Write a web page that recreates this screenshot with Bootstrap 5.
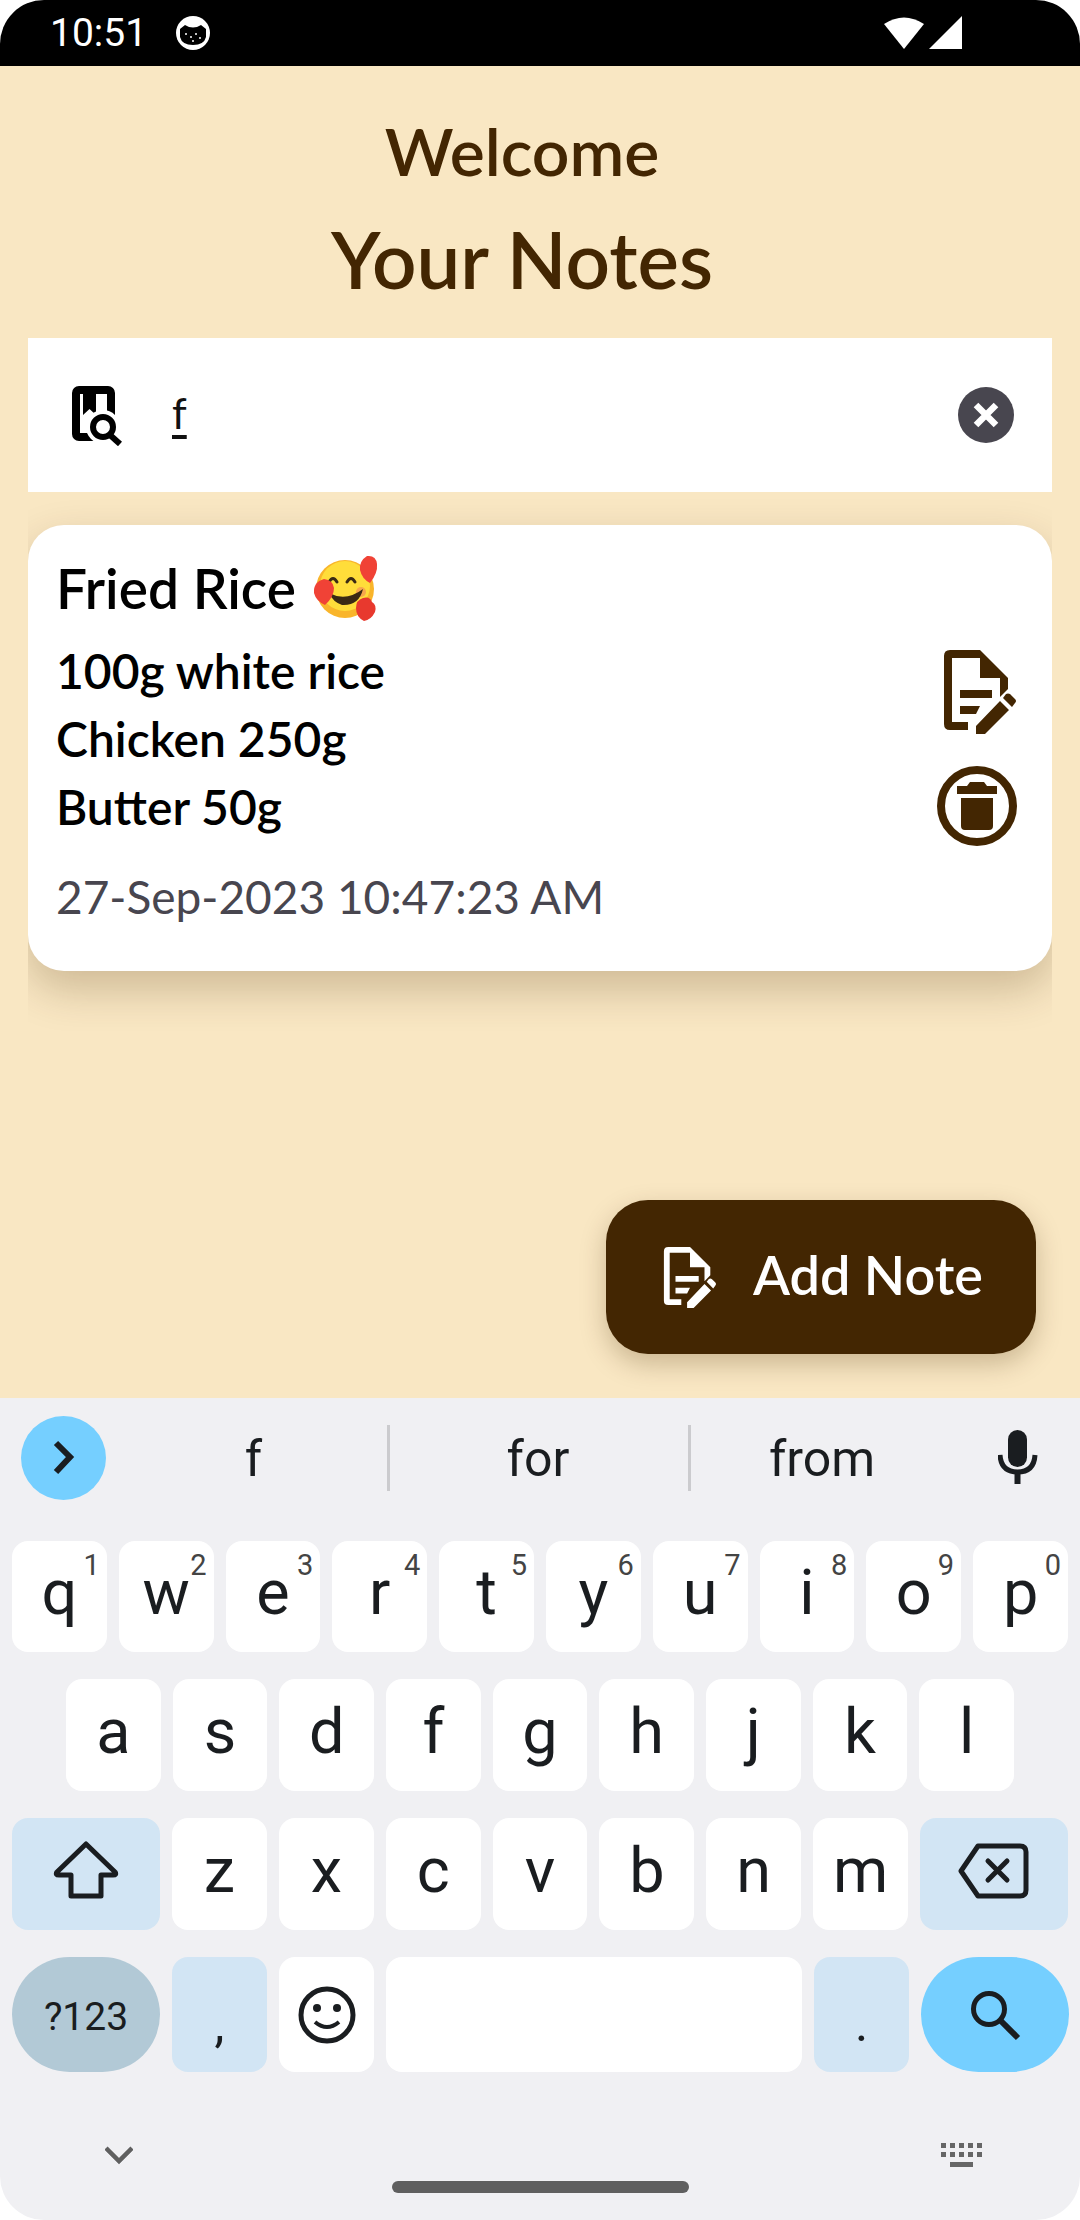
<!DOCTYPE html>
<html lang="en">
<head>
  <meta charset="UTF-8" />
  <meta name="viewport" content="width=device-width, initial-scale=1.0"/>
  <title>Your Notes</title>
  <link href="https://cdn.jsdelivr.net/npm/bootstrap@5.3.3/dist/css/bootstrap.min.css" rel="stylesheet" />
  <style>
    html, body { margin: 0; background: #fff; }
    .phone { width: 1080px; height: 2220px; border-radius: 44px; overflow: hidden; font-family: Lato, sans-serif; }
    .status-bar { height: 66px; background: #000; color: #fff; padding: 0 50px; font: 39px Roboto, sans-serif; }
    .status-cat { margin-left: 28px; }
    .status-right { margin-left: auto; margin-right: 68px; }
    .app-area { height: 1332px; background: #f9e7c3; position: relative; }
    .hello { color: #432602; font-size: 66px; line-height: 80px; padding: 45px 36px 0 0; font-weight: 600; }
    .page-title { color: #432602; font-size: 78px; line-height: 92px; padding: 22px 36px 0 0; font-weight: 600; }
    .search-bar { margin: 33px 28px 0; height: 154px; padding: 0 38px 0 42px; }
    .search-text { margin: 0 0 4px 48px; font-size: 42px; color: #111; text-decoration: underline; text-underline-offset: 6px; }
    .clear-btn { width: 56px; height: 56px; border-radius: 50%; background: #48464f; margin-left: auto; }
    .list-clip { margin: 0 28px; padding: 33px 0 60px; overflow: hidden; }
    .note-card { height: 446px; border: 0; border-radius: 36px; box-shadow: 0 18px 44px rgba(67, 38, 2, .24); padding: 0 35px 0 28px; position: relative; }
    .note-title { color: #000; font-size: 55px; line-height: 60px; font-weight: 600; padding-top: 30px; }
    .note-line { color: #000; font-size: 48px; line-height: 68px; font-weight: 600; }
    .note-lines { padding-top: 16px; }
    .note-date { color: #48464f; font-size: 46px; line-height: 60px; padding-top: 26px; }
    .note-actions { gap: 28px; padding-top: 121px; }
    .note-edit { color: #432602; margin-right: -3px; }
    .fab { position: absolute; left: 606px; top: 1134px; width: 430px; height: 154px; border-radius: 42px; background: #432602; color: #fff; border: 0; box-shadow: 0 10px 26px rgba(67, 38, 2, .25); font-size: 54px; font-weight: 600; gap: 34px; padding: 0 0 6px 55px; }
    .fab svg { margin-top: 6px; }
    .fab:hover, .fab:active { background: #432602 !important; color: #fff !important; }
    .kb { height: 822px; background: #f0f0f3; font-family: Roboto, sans-serif; color: #1a1d20; }
    .kb-suggest { height: 143px; padding: 18px 0 0 21px; align-items: flex-start; }
    .kb-more { width: 85px; height: 84px; border-radius: 50%; background: #75cfff; }
    .kb-word { height: 66px; margin-top: 9px; font-size: 50px; padding: 2px 2px 0 0; }
    .kb-word-1 { width: 281px; padding-left: 16px; }
    .kb-word-2 { border-left: 3px solid #cbcbce; border-right: 3px solid #cbcbce; width: 304px; }
    .kb-word-3 { width: 264px; }
    .kb-mic { margin: 14px 0 0 43px; }
    .kb-rows { gap: 27px; padding: 0 12px; }
    .kb-row { gap: 12px; height: 111px; }
    .kb-row-2 { padding: 0 54px; height: 112px; }
    .kb-row-3 { height: 112px; }
    .kb-row-4 { height: 115px; }
    .kb-key { flex: 1 1 0; background: #fff; border-radius: 16px; font-size: 63px; position: relative; padding-bottom: 6px; }
    .kb-num { position: absolute; top: 3px; right: 7px; font-size: 29px; color: #444; }
    .kb-wide { flex: 0 0 148px; }
    .kb-blue { background: #d2e5f4; }
    .kb-pill { background: #b2c9d6; border-radius: 58px; font-size: 39px; padding: 5px 0 0; }
    .kb-go { background: #75cfff; border-radius: 58px; padding: 0; }
    .kb-space { flex: 0 0 416px; }
    .kb-punct { flex: 0 0 95px; font-size: 50px; padding: 20px 0 0; }
    .kb-emoji { flex: 0 0 95px; padding: 0; }
    .kb-foot { padding: 71px 97px 0 105px; }
    .kb-handle { width: 297px; height: 12px; border-radius: 6px; background: #5f5f5f; margin: 14px auto 0; }
  </style>
</head>
<body>

  <!-- shared icon: note with pencil -->
  <svg width="0" height="0" class="position-absolute">
    <symbol id="noteEdit" viewBox="940 645 80 92">
      <path fill="currentColor" d="M950 649H980L1008 677V688L1000 696V677H980V657H952V721H968V729H950Q944 729 944 723V655Q944 649 950 649Z"/>
      <path fill="currentColor" d="M960 689H992V697H960ZM960 705H980L976 713H960Z"/>
      <path fill="currentColor" d="M976 733V725L1000 700L1009 709L985 733ZM1003 697L1006 693Q1008 692 1010 693L1015 698Q1017 700 1015 702L1012 706Z"/>
    </symbol>
  </svg>

  <div class="phone d-flex flex-column">

    <div class="status-bar d-flex align-items-center">
      <span>10:51</span>
      <svg class="status-cat" width="36" height="36" viewBox="0 0 36 36">
        <circle cx="18" cy="18" r="17" fill="#fff"/>
        <path d="M5 14L10 10Q18 15 26 10L31 14V22Q29 30 18 30Q7 30 5 22Z" fill="#000"/>
        <g fill="#fff"><circle cx="11" cy="19" r="1"/><circle cx="16" cy="22" r="1"/><circle cx="21" cy="19" r="1"/><circle cx="25" cy="23" r="1"/><circle cx="18" cy="26" r="1"/></g>
      </svg>
      <svg class="status-right" width="80" height="36" viewBox="0 0 80 36">
        <path d="M2 9Q22 -4 42 9L22 34Z" fill="#fff"/>
        <path d="M80 1V34H47Z" fill="#fff"/>
      </svg>
    </div>

    <div class="app-area">
      <div class="hello text-center">Welcome</div>
      <div class="page-title text-center">Your Notes</div>

      <div class="search-bar bg-white d-flex align-items-center">
        <svg width="54" height="62" viewBox="70 385 54 62">
          <rect x="76" y="391" width="35" height="47" rx="3" fill="none" stroke="#000" stroke-width="8"/>
          <path d="M83 391H96V416L89.500 410L83 416Z" fill="#000"/>
          <circle cx="103" cy="428" r="17" fill="#fff"/>
          <circle cx="103" cy="428" r="10" fill="none" stroke="#000" stroke-width="6"/>
          <path d="M110 436L120 445" stroke="#000" stroke-width="6"/>
        </svg>
        <span class="search-text">f</span>
        <div class="clear-btn d-flex align-items-center justify-content-center">
          <svg width="32" height="32" viewBox="0 0 32 32"><path d="M6 6L26 26M26 6L6 26" stroke="#fff" stroke-width="6.500"/></svg>
        </div>
      </div>

      <div class="list-clip">
        <div class="card note-card d-flex flex-row justify-content-between">
          <div>
            <div class="note-title d-flex align-items-center">Fried Rice
              <svg class="ms-3" width="66" height="66" viewBox="0 0 66 66">
                <circle cx="33" cy="34" r="29" fill="#f9b52b"/>
                <circle cx="33" cy="31" r="25" fill="#ffdd3a"/>
                <circle cx="49" cy="37" r="5" fill="#f7a84c"/>
                <path d="M17 27Q21 20 25 27M35 27Q39 20 43 27" fill="none" stroke="#3a2a14" stroke-width="3" stroke-linecap="round"/>
                <path d="M17 38Q34 47 51 34Q47 51 30 50Q21 47 17 38Z" fill="#3a2a14"/>
                <path d="M55 1Q64 0 65 9Q66 18 58 28Q50 24 48 15Q47 6 55 1Z" fill="#f04236"/>
                <path d="M12 24Q21 25 22 33Q22 42 13 50Q4 46 2 38Q1 27 12 24Z" fill="#f04236"/>
                <path d="M51 43Q58 41 60 47Q65 50 63 57Q59 65 52 66Q44 62 44 53Q44 45 51 43Z" fill="#e8392e"/>
              </svg>
            </div>
            <div class="note-lines">
              <div class="note-line">100g white rice</div>
              <div class="note-line">Chicken 250g</div>
              <div class="note-line">Butter 50g</div>
            </div>
            <div class="note-date">27-Sep-2023 10:47:23 AM</div>
          </div>
          <div class="note-actions d-flex flex-column align-items-end">
            <svg width="80" height="92" class="note-edit"><use href="#noteEdit"/></svg>
            <svg width="80" height="80" viewBox="936 767 80 80">
              <circle cx="976" cy="807" r="36" fill="none" stroke="#432602" stroke-width="8"/>
              <path fill="#432602" d="M956 787H966L969 783H983L986 787H996V795H956ZM960 799H992V827Q992 831 988 831H964Q960 831 960 827Z"/>
            </svg>
          </div>
        </div>
      </div>

      <button class="btn fab d-flex align-items-center">
        <svg width="58" height="67"><use href="#noteEdit"/></svg>
        <span>Add Note</span>
      </button>
    </div>

    <div class="kb">
      <div class="kb-suggest d-flex">
        <div class="kb-more d-flex align-items-center justify-content-center">
          <svg width="24" height="36" viewBox="0 0 24 36"><path d="M4 3L18 17L4 32" fill="none" stroke="#1a1d20" stroke-width="6"/></svg>
        </div>
        <div class="kb-word kb-word-1 d-flex align-items-center justify-content-center">f</div>
        <div class="kb-word kb-word-2 d-flex align-items-center justify-content-center">for</div>
        <div class="kb-word kb-word-3 d-flex align-items-center justify-content-center">from</div>
        <svg class="kb-mic" width="40" height="54" viewBox="0 0 40 54">
          <rect x="10" y="0" width="19" height="37" rx="9.500" fill="#1a1d20"/>
          <path d="M2 25Q3 42 19.500 42Q36 42 37 25" fill="none" stroke="#1a1d20" stroke-width="5"/>
          <path d="M19.500 42V54" stroke="#1a1d20" stroke-width="6"/>
        </svg>
      </div>

      <div class="kb-rows d-flex flex-column">
        <div class="kb-row d-flex">
          <div class="kb-key d-flex align-items-center justify-content-center">q<span class="kb-num">1</span></div>
          <div class="kb-key d-flex align-items-center justify-content-center">w<span class="kb-num">2</span></div>
          <div class="kb-key d-flex align-items-center justify-content-center">e<span class="kb-num">3</span></div>
          <div class="kb-key d-flex align-items-center justify-content-center">r<span class="kb-num">4</span></div>
          <div class="kb-key d-flex align-items-center justify-content-center">t<span class="kb-num">5</span></div>
          <div class="kb-key d-flex align-items-center justify-content-center">y<span class="kb-num">6</span></div>
          <div class="kb-key d-flex align-items-center justify-content-center">u<span class="kb-num">7</span></div>
          <div class="kb-key d-flex align-items-center justify-content-center">i<span class="kb-num">8</span></div>
          <div class="kb-key d-flex align-items-center justify-content-center">o<span class="kb-num">9</span></div>
          <div class="kb-key d-flex align-items-center justify-content-center">p<span class="kb-num">0</span></div>
        </div>
        <div class="kb-row kb-row-2 d-flex">
          <div class="kb-key d-flex align-items-center justify-content-center">a</div>
          <div class="kb-key d-flex align-items-center justify-content-center">s</div>
          <div class="kb-key d-flex align-items-center justify-content-center">d</div>
          <div class="kb-key d-flex align-items-center justify-content-center">f</div>
          <div class="kb-key d-flex align-items-center justify-content-center">g</div>
          <div class="kb-key d-flex align-items-center justify-content-center">h</div>
          <div class="kb-key d-flex align-items-center justify-content-center">j</div>
          <div class="kb-key d-flex align-items-center justify-content-center">k</div>
          <div class="kb-key d-flex align-items-center justify-content-center">l</div>
        </div>
        <div class="kb-row kb-row-3 d-flex">
          <div class="kb-key kb-wide kb-blue d-flex align-items-center justify-content-center">
            <svg width="66" height="60" viewBox="0 0 66 60"><path d="M33 3L4 31Q2 34 6 34H18V55H48V34H60Q64 34 62 31Z" fill="none" stroke="#1a1d20" stroke-width="5" stroke-linejoin="round"/></svg>
          </div>
          <div class="kb-key d-flex align-items-center justify-content-center">z</div>
          <div class="kb-key d-flex align-items-center justify-content-center">x</div>
          <div class="kb-key d-flex align-items-center justify-content-center">c</div>
          <div class="kb-key d-flex align-items-center justify-content-center">v</div>
          <div class="kb-key d-flex align-items-center justify-content-center">b</div>
          <div class="kb-key d-flex align-items-center justify-content-center">n</div>
          <div class="kb-key d-flex align-items-center justify-content-center">m</div>
          <div class="kb-key kb-wide kb-blue d-flex align-items-center justify-content-center">
            <svg width="72" height="56" viewBox="0 0 72 56"><path d="M20 3H62Q68 3 68 9V47Q68 53 62 53H20L3 28Z" fill="none" stroke="#1a1d20" stroke-width="5" stroke-linejoin="round"/><path d="M30 18L49 37M49 18L30 37" stroke="#1a1d20" stroke-width="5" stroke-linecap="round"/></svg>
          </div>
        </div>
        <div class="kb-row kb-row-4 d-flex">
          <div class="kb-key kb-wide kb-pill d-flex align-items-center justify-content-center">?123</div>
          <div class="kb-key kb-punct kb-blue d-flex align-items-center justify-content-center">,</div>
          <div class="kb-key kb-emoji d-flex align-items-center justify-content-center">
            <svg width="58" height="58" viewBox="0 0 58 58"><circle cx="29" cy="29" r="26" fill="none" stroke="#1a1d20" stroke-width="5"/><circle cx="19" cy="22" r="4" fill="#1a1d20"/><circle cx="39" cy="22" r="4" fill="#1a1d20"/><path d="M17 36Q29 46 41 36" fill="none" stroke="#1a1d20" stroke-width="4"/></svg>
          </div>
          <div class="kb-key kb-space"></div>
          <div class="kb-key kb-punct kb-blue d-flex align-items-center justify-content-center">.</div>
          <div class="kb-key kb-wide kb-go d-flex align-items-center justify-content-center">
            <svg width="52" height="52" viewBox="0 0 52 52"><circle cx="20" cy="20" r="15.500" fill="none" stroke="#1a1d20" stroke-width="5"/><path d="M31 31L49 49" stroke="#1a1d20" stroke-width="6"/></svg>
          </div>
        </div>
      </div>

      <div class="kb-foot d-flex justify-content-between align-items-center">
        <svg width="28" height="20" viewBox="0 0 28 20"><path d="M1 3L14 16L27 3" fill="none" stroke="#5f5f5f" stroke-width="4.500"/></svg>
        <svg width="42" height="24" viewBox="0 0 42 24" fill="#666">
          <rect x="0" y="0" width="5" height="5"/><rect x="9" y="0" width="5" height="5"/><rect x="18" y="0" width="5" height="5"/><rect x="27" y="0" width="5" height="5"/><rect x="36" y="0" width="5" height="5"/>
          <rect x="0" y="9" width="5" height="5"/><rect x="9" y="9" width="5" height="5"/><rect x="18" y="9" width="5" height="5"/><rect x="27" y="9" width="5" height="5"/><rect x="36" y="9" width="5" height="5"/>
          <rect x="9" y="19" width="23" height="5"/>
        </svg>
      </div>
      <div class="kb-handle"></div>
    </div>

  </div>

  <script src="https://cdn.jsdelivr.net/npm/bootstrap@5.3.3/dist/js/bootstrap.bundle.min.js"></script>
</body>
</html>
